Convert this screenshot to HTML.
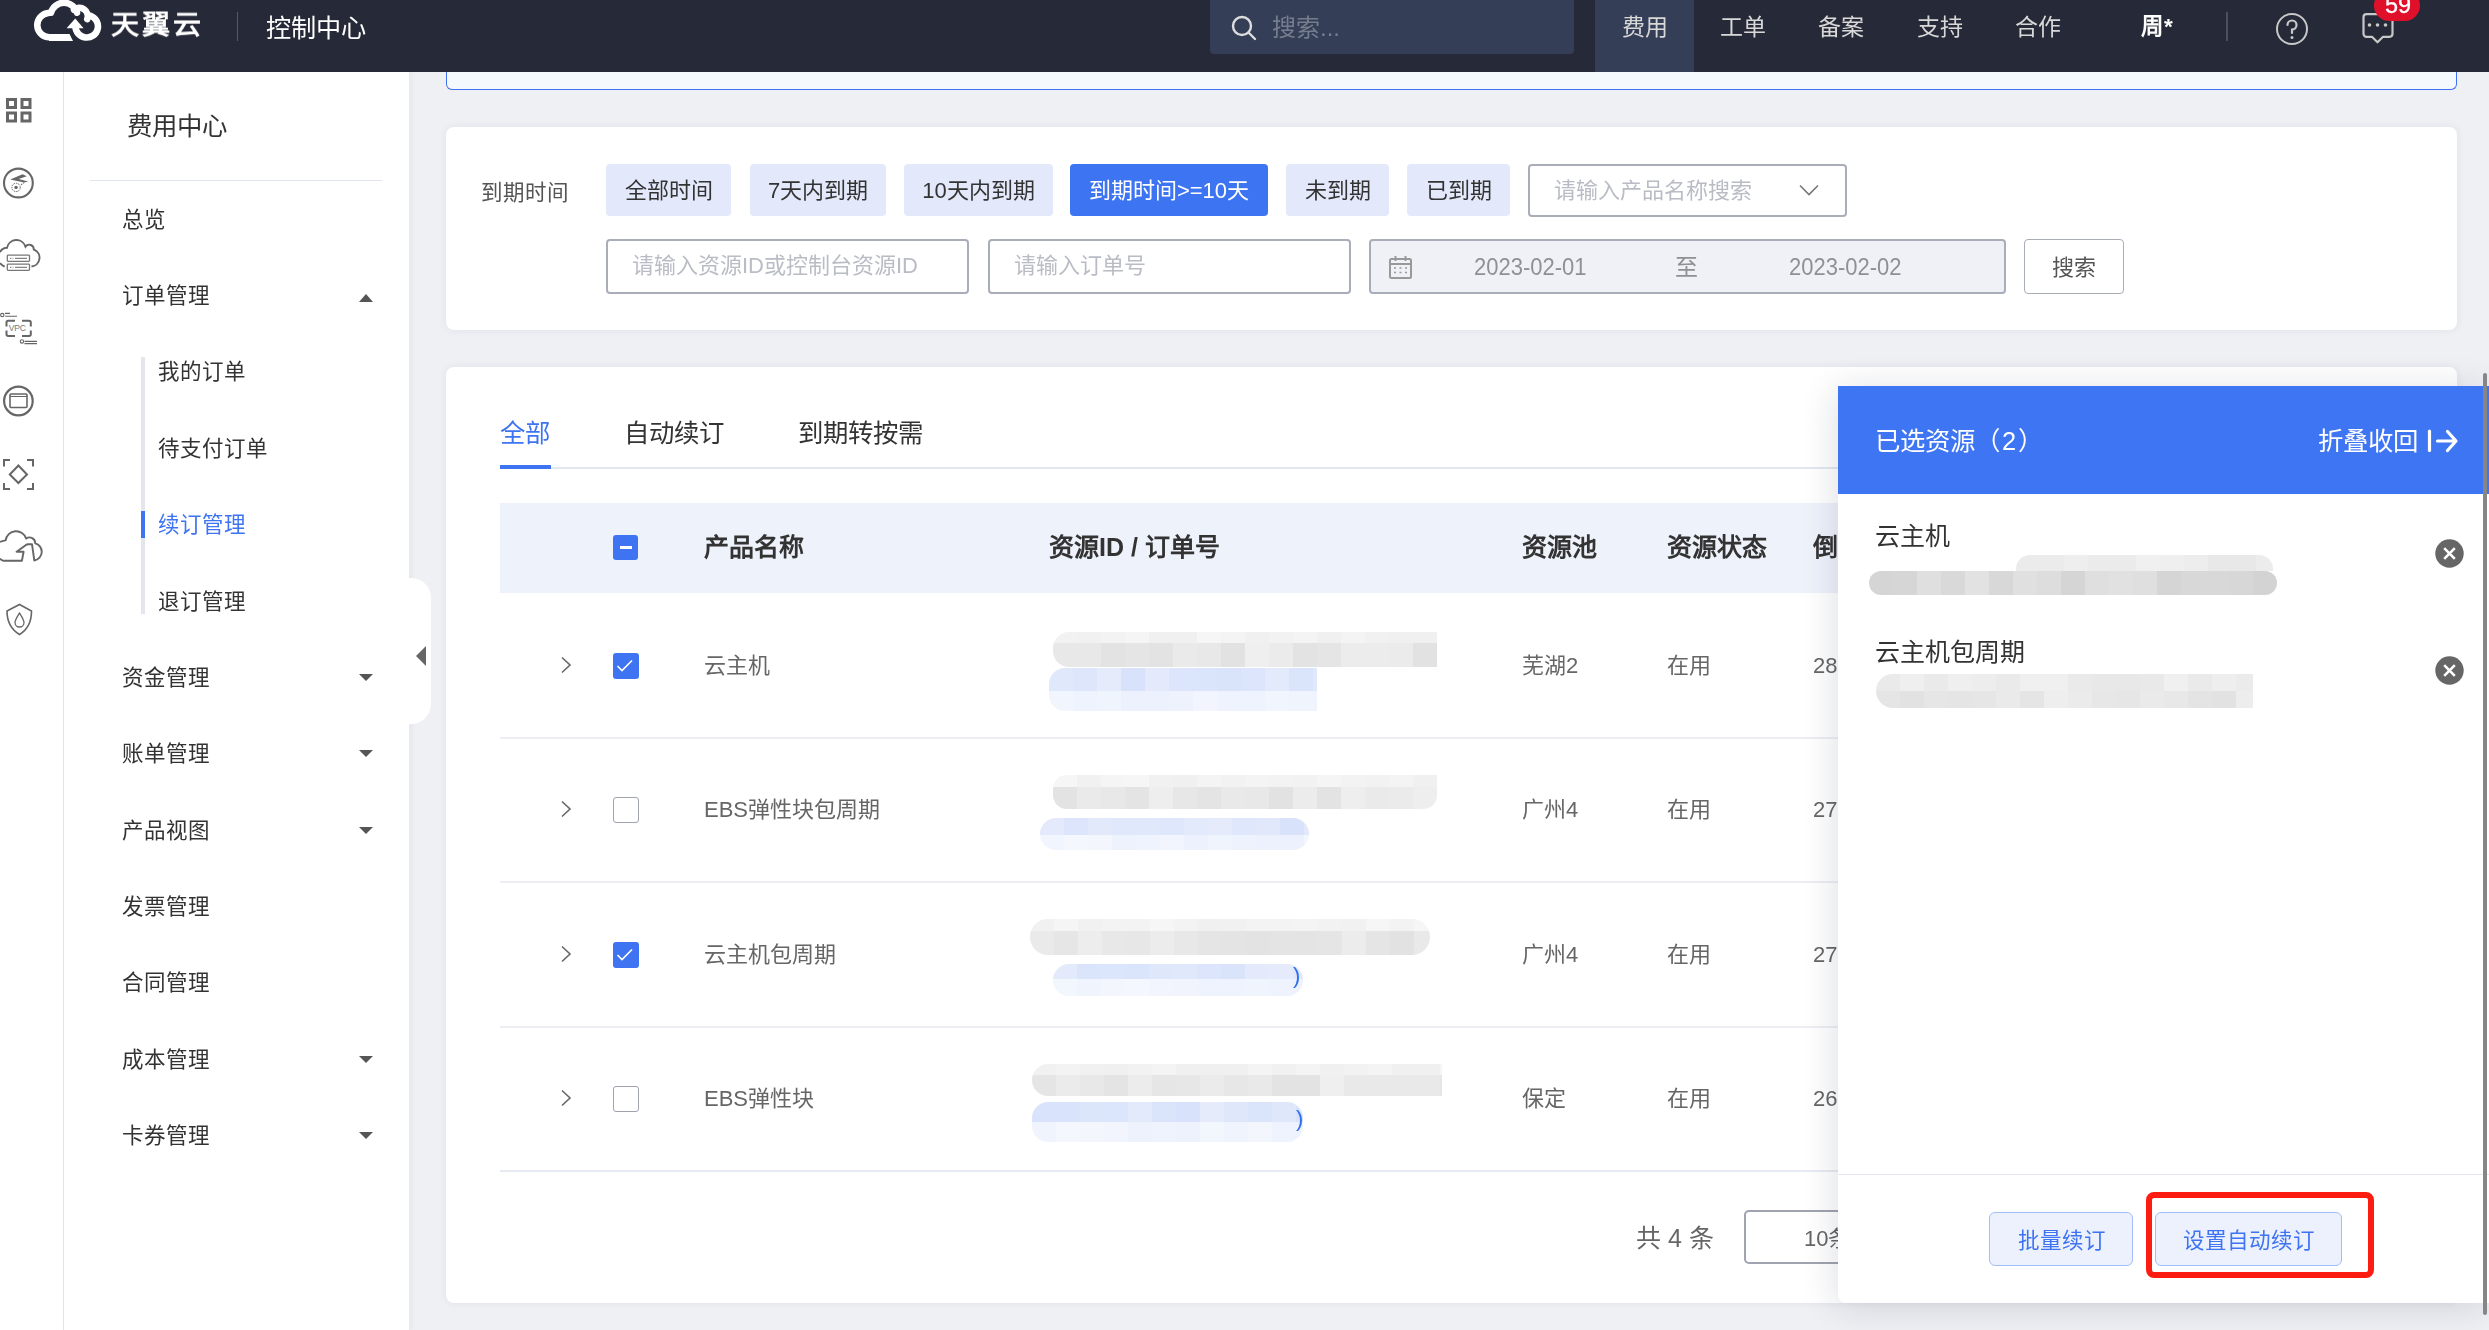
<!DOCTYPE html>
<html lang="zh-CN"><head><meta charset="utf-8">
<style>
*{margin:0;padding:0;box-sizing:border-box}
.t,.fbtn,.inp{will-change:transform}
html,body{width:2489px;height:1330px;overflow:hidden;background:#eff0f4;font-family:"Liberation Sans",sans-serif;color:#333}
.a{position:absolute}
.t{position:absolute;white-space:nowrap;line-height:1}
#top{z-index:5;left:0;top:0;width:2489px;height:72px;background:#262a38}
#rail{left:0;top:71px;width:64px;height:1259px;background:#fff;border-right:1px solid #e3e6ee}
#menu{left:64px;top:71px;width:345px;height:1259px;background:#fff;box-shadow:2px 0 6px rgba(30,40,70,0.05)}
.mi{font-size:21.5px;color:#333}
.caret{position:absolute;width:0;height:0;border-left:7px solid transparent;border-right:7px solid transparent}
.card{position:absolute;background:#fff;border-radius:8px;box-shadow:0 0 8px rgba(30,40,70,0.07)}
.fbtn{position:absolute;top:164px;height:52px;background:#e3e9fa;border-radius:4px;font-size:22px;color:#333;line-height:54px;text-align:center}
.inp{position:absolute;top:239px;height:54.5px;border:2px solid #a9adb9;border-radius:4px;background:#fff;font-size:22px;color:#b9bcc4;line-height:50px}
.th{font-size:25px;font-weight:bold;color:#333}
.td{font-size:22px;color:#666}
.cb{position:absolute;width:26px;height:26px;border-radius:3px}
.cbon{background:#3e74f2}
.cboff{border:1.5px solid #9fa3ad;background:#fff}
.sep{position:absolute;left:500px;width:1340px;height:2px;background:#eceef3}
.blur{position:absolute;border-radius:18px}
</style></head><body>
<!-- top bar -->
<div id="top" class="a">
  <svg class="a" style="left:34px;top:0" width="70" height="44" viewBox="0 0 70 44">
    <path d="M15.40 37.25 A12.15 12.15 0 0 1 14.34 13.00 M17.01 12.72 A13.45 13.45 0 0 1 42.99 12.72 M40.03 9.80 A8.35 8.35 0 0 1 53.25 19.06 M56.55 15.73 A11.25 11.25 0 1 1 41.45 26.30" fill="none" stroke="#fff" stroke-width="6.6" stroke-linecap="round"/>
    <path d="M15 34 H35.5 L39 41 H15 Z" fill="#fff"/>
    <path d="M41.2 18.6 L32.6 28.2 H49.6 Z" fill="#fff"/>
  </svg>
  <div class="t" style="left:111px;top:11px;font-size:28px;color:#fff;font-weight:bold;letter-spacing:3px;transform:scaleY(0.95);transform-origin:0 100%">天翼云</div>
  <div class="a" style="left:237px;top:12px;width:1px;height:29px;background:#555a66"></div>
  <div class="t" style="left:266px;top:15.5px;font-size:25.2px;color:#fff">控制中心</div>
  <div class="a" style="left:1210px;top:0;width:364px;height:54px;background:#353e57;border-radius:0 0 4px 4px"></div>
  <svg class="a" style="left:1230px;top:14px" width="28" height="28" viewBox="0 0 28 28"><circle cx="12" cy="12" r="9" fill="none" stroke="#ddd" stroke-width="2.4"/><path d="M18.5 18.5 L25 25" stroke="#ddd" stroke-width="2.4" stroke-linecap="round"/></svg>
  <div class="t" style="left:1272px;top:16px;font-size:24px;color:#767d8f">搜索...</div>
  <div class="a" style="left:1595px;top:0;width:99px;height:72px;background:#353e57"></div>
  <div class="t" style="left:1622px;top:15.5px;font-size:23px;color:#d8d8d8">费用</div>
  <div class="t" style="left:1720px;top:15.5px;font-size:23px;color:#d8d8d8">工单</div>
  <div class="t" style="left:1818px;top:15.5px;font-size:23px;color:#d8d8d8">备案</div>
  <div class="t" style="left:1917px;top:15.5px;font-size:23px;color:#d8d8d8">支持</div>
  <div class="t" style="left:2015px;top:15.5px;font-size:23px;color:#d8d8d8">合作</div>
  <div class="t" style="left:2141px;top:16px;font-size:22.5px;color:#fff;font-weight:bold">周*</div>
  <div class="a" style="left:2226px;top:12px;width:2px;height:29px;background:#4b505c"></div>
  <svg class="a" style="left:2275px;top:12px" width="34" height="34" viewBox="0 0 34 34"><circle cx="17" cy="17" r="15" fill="none" stroke="#c8c8c8" stroke-width="2"/><path d="M12.5 13 A4.5 4.5 0 1 1 17 17.5 V21" fill="none" stroke="#c8c8c8" stroke-width="2.2" stroke-linecap="round"/><circle cx="17" cy="25.5" r="1.5" fill="#c8c8c8"/></svg>
  <svg class="a" style="left:2360px;top:12px" width="36" height="34" viewBox="0 0 36 34"><path d="M6.5 2.2 H29.5 A3 3 0 0 1 32.5 5.2 V21.8 A3 3 0 0 1 29.5 24.8 H23 L17.5 30.3 L12 24.8 H6.5 A3 3 0 0 1 3.5 21.8 V5.2 A3 3 0 0 1 6.5 2.2 Z" fill="none" stroke="#c8c8c8" stroke-width="2.2" stroke-linejoin="round"/><circle cx="9.5" cy="13" r="1.8" fill="#c8c8c8"/><circle cx="17.5" cy="13" r="1.8" fill="#c8c8c8"/><circle cx="25.5" cy="13" r="1.8" fill="#c8c8c8"/></svg>
  <div class="a" style="left:2374px;top:-10px;width:46px;height:31px;background:#e0102b;border-radius:16px"></div>
  <div class="t" style="left:2385px;top:-6px;font-size:23.5px;color:#fff;-webkit-text-stroke:0.3px #fff">59</div>
</div>

<!-- rail -->
<div id="rail" class="a"></div>
<svg class="a" style="left:0;top:90px" width="64" height="560" viewBox="0 0 64 560" fill="none" stroke="#666" stroke-width="2">
  <g stroke-width="3"><rect x="7.5" y="9.5" width="8" height="8"/><rect x="22" y="9.5" width="8" height="8"/><rect x="7.5" y="23" width="8" height="8"/><rect x="22" y="23" width="8" height="8"/></g>
  <circle cx="18.4" cy="93" r="14.4" stroke-width="2.1"/><path d="M10.2 89.6 L22.6 84.2 L26.8 86.3 L18.6 88.9 L28.2 91.4 L24.2 92.5 L14.8 90.4 Z" fill="#666" stroke="none"/><path d="M24 92.6 L21 94.8" stroke-width="1.1" stroke-dasharray="1.3 1"/><circle cx="16.05" cy="97.4" r="4.2" stroke-width="1" stroke-dasharray="1.5 0.9"/><circle cx="16.05" cy="97.4" r="1.7" fill="#666" stroke="none"/>
  <path d="M0 162.2 A8 8 0 0 1 7 157.7 A9.6 9.6 0 0 1 25.5 156.6 A4.6 4.6 0 0 1 33.8 159.5 A8.8 8.8 0 0 1 31.5 176.5 M0 173.2 Q2.2 175.6 4.7 176.6" stroke-width="1.9"/><rect x="7.3" y="165.2" width="22.2" height="6.2" rx="0.8" stroke-width="1.3" stroke="#777"/><rect x="7.3" y="174.2" width="22.2" height="6.2" rx="0.8" stroke-width="1.3" stroke="#777"/><path d="M10 168.3 H11.3 M12.6 168.3 H13.4 M15 168.3 H27 M10 177.3 H11.3 M12.6 177.3 H13.4 M15 177.3 H27" stroke-width="1" stroke="#666"/>
  <path d="M6.5 236.5 V232.5 Q6.5 230.8 8.2 230.8 H15 M22 230.8 H29 Q30.8 230.8 30.8 232.5 V236.5 M6.5 240.5 V244.3 Q6.5 246 8.2 246 H15 M22 246 H29 Q30.8 246 30.8 244.3 V240.5" stroke-width="2"/><text x="17.3" y="241" font-size="8.6" fill="#777" stroke="none" text-anchor="middle" font-family="Liberation Sans" letter-spacing="-0.2">VPC</text><circle cx="2.3" cy="225.1" r="1.7" stroke-width="1.1"/><path d="M5 223.4 H10 M5.2 226.3 H17" stroke-width="1.1"/><circle cx="21.9" cy="251.4" r="1.7" stroke-width="1.1"/><path d="M24.5 251.4 H37 M24.5 253.6 H37" stroke-width="1.1"/>
  <circle cx="18.4" cy="311" r="14.3" stroke-width="2.2"/><rect x="10" y="304" width="17" height="13.5" rx="1" stroke-width="1.6"/><path d="M10 306.5 H27" stroke-width="1"/>
  <path d="M4 376.5 V370 H10 M27 370 H33 V376.5 M4 393 V399 H10 M27 399 H33 V393" stroke-width="2"/><path d="M18.4 375.5 L27 384.5 L18.4 393 L9.8 384.5 Z" stroke-width="2"/>
  <path d="M0 452 Q3 450.6 5.6 450.4 A10.6 10.6 0 0 1 26.2 448.6 A5.6 5.6 0 0 1 35.2 453.3 A8.8 8.8 0 0 1 34.3 470.5 L32 454.2 H28.2 Q27 454.2 26 454.9 L16.6 461.8 H23.6 L21.9 470.8 H3.6 Q1.5 470.2 0 468.6" stroke-width="1.9" stroke-linejoin="round"/>
  <path d="M19.5 514.5 L31.5 521 C31.5 533 27 540 19.5 544.5 C12 540 7 533 7 521 Z" stroke-width="1.6"/><path d="M19.5 523 C17 527 15 530 15 532.5 A4.5 4.5 0 0 0 24 532.5 C24 530 22 527 19.5 523 Z" stroke-width="1.3"/>
</svg>
<!-- menu -->
<div id="menu" class="a"></div>
<div class="t" style="left:127px;top:114px;font-size:25.4px;color:#333">费用中心</div>
<div class="a" style="left:90px;top:180px;width:292px;height:1px;background:#dfe3ec"></div>
<div class="t mi" style="left:122px;top:210px">总览</div>
<div class="t mi" style="left:122px;top:286px">订单管理</div>
<div class="caret" style="left:359px;top:294px;border-bottom:8px solid #555"></div>
<div class="a" style="left:141px;top:357px;width:4px;height:257px;background:#e3e6ef"></div>
<div class="a" style="left:141px;top:511px;width:4px;height:27px;background:#3e74f2"></div>
<div class="t mi" style="left:158px;top:362px">我的订单</div>
<div class="t mi" style="left:158px;top:439px">待支付订单</div>
<div class="t mi" style="left:158px;top:515px;color:#3e74f2">续订管理</div>
<div class="t mi" style="left:158px;top:592px">退订管理</div>
<div class="t mi" style="left:122px;top:668px">资金管理</div>
<div class="caret" style="left:359px;top:674px;border-top:7px solid #555"></div>
<div class="t mi" style="left:122px;top:744px">账单管理</div>
<div class="caret" style="left:359px;top:750px;border-top:7px solid #555"></div>
<div class="t mi" style="left:122px;top:821px">产品视图</div>
<div class="caret" style="left:359px;top:827px;border-top:7px solid #555"></div>
<div class="t mi" style="left:122px;top:897px">发票管理</div>
<div class="t mi" style="left:122px;top:973px">合同管理</div>
<div class="t mi" style="left:122px;top:1050px">成本管理</div>
<div class="caret" style="left:359px;top:1056px;border-top:7px solid #555"></div>
<div class="t mi" style="left:122px;top:1126px">卡券管理</div>
<div class="caret" style="left:359px;top:1132px;border-top:7px solid #555"></div>
<!-- collapse tab -->
<div class="a" style="left:409px;top:578px;width:22px;height:146px;background:#fff;border-radius:0 20px 20px 0"></div>
<div class="caret" style="left:416px;top:646px;border-left:none;border-top:10px solid transparent;border-bottom:10px solid transparent;border-right:10px solid #666;width:0;height:0"></div>

<!-- alert box -->
<div class="a" style="left:446px;top:60px;width:2011px;height:30px;background:#f4f9fe;border:1.5px solid #3f72f0;border-top:none;border-radius:0 0 6px 6px"></div>

<!-- filter card -->
<div class="card" style="left:446px;top:127px;width:2011px;height:203px"></div>
<div class="t" style="left:481px;top:183px;font-size:21.5px;color:#555">到期时间</div>
<div class="fbtn" style="left:606px;width:125px">全部时间</div>
<div class="fbtn" style="left:750px;width:136px">7天内到期</div>
<div class="fbtn" style="left:904px;width:149px">10天内到期</div>
<div class="fbtn" style="left:1070px;width:198px;background:#3d74f1;color:#fff">到期时间&gt;=10天</div>
<div class="fbtn" style="left:1286px;width:103px">未到期</div>
<div class="fbtn" style="left:1407px;width:103px">已到期</div>
<div class="inp" style="left:1528px;top:164px;width:319px;height:53px;padding-left:24px">请输入产品名称搜索</div>
<svg class="a" style="left:1797px;top:182px" width="24" height="16" viewBox="0 0 24 16"><path d="M3 3.5 L12 12.5 L21 3.5" fill="none" stroke="#777" stroke-width="1.6"/></svg>
<div class="inp" style="left:606px;width:363px;padding-left:24px">请输入资源ID或控制台资源ID</div>
<div class="inp" style="left:988px;width:363px;padding-left:24px">请输入订单号</div>
<div class="inp" style="left:1369px;width:637px;background:#f0f1f6"></div>
<svg class="a" style="left:1388px;top:255px" width="26" height="25" viewBox="0 0 26 25" fill="none" stroke="#999" stroke-width="2"><rect x="2" y="4" width="21" height="19" rx="1.5"/><path d="M2 9 H23 M7.5 1 V6 M17.5 1 V6"/><path d="M6 13 H8 M11.5 13 H13.5 M17 13 H19 M6 17.5 H8 M11.5 17.5 H13.5 M17 17.5 H19" stroke-width="1.6"/></svg>
<div class="t" style="left:1474px;top:255px;font-size:22px;color:#8f9094;transform:scaleY(1.1);transform-origin:0 0">2023-02-01</div>
<div class="t" style="left:1675px;top:256px;font-size:23px;color:#8f9094">至</div>
<div class="t" style="left:1789px;top:255px;font-size:22px;color:#8f9094;transform:scaleY(1.1);transform-origin:0 0">2023-02-02</div>
<div class="a" style="left:2024px;top:239px;width:100px;height:55px;border:1.5px solid #a9adb6;border-radius:4px;background:#fff"></div>
<div class="t" style="left:2052px;top:257px;font-size:22px;color:#555">搜索</div>

<!-- table card -->
<div class="card" style="left:446px;top:367px;width:2011px;height:936px"></div>
<div class="t" style="left:500px;top:421px;font-size:25.4px;color:#3e74f2">全部</div>
<div class="t" style="left:624px;top:421px;font-size:25.4px;color:#333">自动续订</div>
<div class="t" style="left:798px;top:421px;font-size:25.4px;color:#333">到期转按需</div>
<div class="a" style="left:500px;top:467px;width:1340px;height:2px;background:#e3e7f0"></div>
<div class="a" style="left:500px;top:465px;width:51px;height:4px;background:#3e74f2"></div>
<div class="a" style="left:500px;top:503px;width:1340px;height:90px;background:#eef2fb"></div>
<div class="cb cbon" style="left:613px;top:535px;width:25px;height:25px"><div class="a" style="left:6.5px;top:11px;width:12px;height:2.6px;background:#fff"></div></div>
<div class="t th" style="left:704px;top:535px">产品名称</div>
<div class="t th" style="left:1049px;top:535px">资源ID / 订单号</div>
<div class="t th" style="left:1522px;top:535px">资源池</div>
<div class="t th" style="left:1667px;top:535px">资源状态</div>
<div class="t th" style="left:1813px;top:535px">倒</div>
<svg class="a" style="left:560px;top:656px" width="12" height="18" viewBox="0 0 12 18"><path d="M2 1.5 L10 9 L2 16.5" fill="none" stroke="#666" stroke-width="1.6"/></svg>
<div class="cb cbon" style="left:613px;top:653px"><svg class="a" style="left:0;top:0" width="26" height="26" viewBox="0 0 26 26"><path d="M4.5 13 L9 17.5 L19 7.5" fill="none" stroke="#fff" stroke-width="1.6"/></svg></div>
<div class="t td" style="left:704px;top:655px">云主机</div>
<div class="t td" style="left:1522px;top:655px">芜湖2</div>
<div class="t td" style="left:1667px;top:655px">在用</div>
<div class="t td" style="left:1813px;top:655px">28</div>
<svg class="a" style="left:560px;top:800px" width="12" height="18" viewBox="0 0 12 18"><path d="M2 1.5 L10 9 L2 16.5" fill="none" stroke="#666" stroke-width="1.6"/></svg>
<div class="cb cboff" style="left:613px;top:797px"></div>
<div class="t td" style="left:704px;top:799px">EBS弹性块包周期</div>
<div class="t td" style="left:1522px;top:799px">广州4</div>
<div class="t td" style="left:1667px;top:799px">在用</div>
<div class="t td" style="left:1813px;top:799px">27</div>
<svg class="a" style="left:560px;top:945px" width="12" height="18" viewBox="0 0 12 18"><path d="M2 1.5 L10 9 L2 16.5" fill="none" stroke="#666" stroke-width="1.6"/></svg>
<div class="cb cbon" style="left:613px;top:942px"><svg class="a" style="left:0;top:0" width="26" height="26" viewBox="0 0 26 26"><path d="M4.5 13 L9 17.5 L19 7.5" fill="none" stroke="#fff" stroke-width="1.6"/></svg></div>
<div class="t td" style="left:704px;top:944px">云主机包周期</div>
<div class="t td" style="left:1522px;top:944px">广州4</div>
<div class="t td" style="left:1667px;top:944px">在用</div>
<div class="t td" style="left:1813px;top:944px">27</div>
<svg class="a" style="left:560px;top:1089px" width="12" height="18" viewBox="0 0 12 18"><path d="M2 1.5 L10 9 L2 16.5" fill="none" stroke="#666" stroke-width="1.6"/></svg>
<div class="cb cboff" style="left:613px;top:1086px"></div>
<div class="t td" style="left:704px;top:1088px">EBS弹性块</div>
<div class="t td" style="left:1522px;top:1088px">保定</div>
<div class="t td" style="left:1667px;top:1088px">在用</div>
<div class="t td" style="left:1813px;top:1088px">26</div>
<div class="sep" style="top:737px;height:1.5px"></div>
<div class="sep" style="top:881px;height:1.5px"></div>
<div class="sep" style="top:1026px;height:1.5px"></div>
<div class="sep" style="top:1170px;height:2px;background:#e6eaf2"></div>
<div class="blur" style="left:1053px;top:632px;width:384px;height:35px;border-radius:16px 0 0 16px;background:linear-gradient(90deg,#f2f2f2 0px 24px,#f1f1f1 24px 48px,#f3f3f3 48px 72px,#f5f5f5 72px 96px,#f0f0f0 96px 120px,#f0f0f0 120px 144px,#f6f6f6 144px 168px,#f4f4f4 168px 192px,#f0f0f0 192px 216px,#f2f2f2 216px 240px,#f4f4f4 240px 264px,#f0f0f0 264px 288px,#f4f4f4 288px 312px,#f1f1f1 312px 336px,#f0f0f0 336px 360px,#f0f0f0 360px 384px) top/100% 11px no-repeat,linear-gradient(90deg,#e8e8e8 0px 24px,#e8e8e8 24px 48px,#e3e3e3 48px 72px,#e5e5e5 72px 96px,#e3e3e3 96px 120px,#eaeaea 120px 144px,#e8e8e8 144px 168px,#e2e2e2 168px 192px,#efefef 192px 216px,#ebebeb 216px 240px,#e3e3e3 240px 264px,#e5e5e5 264px 288px,#ececec 288px 312px,#ececec 312px 336px,#ebebeb 336px 360px,#e2e2e2 360px 384px) bottom/100% 24px no-repeat"></div>
<div class="blur" style="left:1049px;top:668px;width:268px;height:43px;border-radius:16px 0 0 16px;background:linear-gradient(90deg,#e0e8fb 0px 24px,#dde6fb 24px 48px,#e5ebfb 48px 72px,#d8e3fb 72px 96px,#e4eafb 96px 120px,#dce5fb 120px 144px,#dae4fb 144px 168px,#d9e4fb 168px 192px,#dce5fb 192px 216px,#e3eafb 216px 240px,#dae4fb 240px 264px,#e0e8fb 264px 268px) top/100% 23px no-repeat,linear-gradient(90deg,#f1f5fd 0px 24px,#eff3fd 24px 48px,#f0f4fd 48px 72px,#ecf1fd 72px 96px,#ecf1fd 96px 120px,#edf2fd 120px 144px,#f2f5fd 144px 168px,#eff3fd 168px 192px,#eef3fd 192px 216px,#f1f5fd 216px 240px,#f0f4fd 240px 264px,#eef3fd 264px 268px) bottom/100% 20px no-repeat"></div>
<div class="blur" style="left:1053px;top:775px;width:384px;height:34px;border-radius:14px 0 14px 14px;background:linear-gradient(90deg,#f6f6f6 0px 24px,#f1f1f1 24px 48px,#f5f5f5 48px 72px,#f6f6f6 72px 96px,#f1f1f1 96px 120px,#f0f0f0 120px 144px,#f4f4f4 144px 168px,#f2f2f2 168px 192px,#f4f4f4 192px 216px,#f3f3f3 216px 240px,#f2f2f2 240px 264px,#f5f5f5 264px 288px,#f3f3f3 288px 312px,#f2f2f2 312px 336px,#f4f4f4 336px 360px,#f0f0f0 360px 384px) top/100% 12px no-repeat,linear-gradient(90deg,#e3e3e3 0px 24px,#eaeaea 24px 48px,#e8e8e8 48px 72px,#e4e4e4 72px 96px,#eeeeee 96px 120px,#e7e7e7 120px 144px,#e4e4e4 144px 168px,#e9e9e9 168px 192px,#e8e8e8 192px 216px,#e2e2e2 216px 240px,#ececec 240px 264px,#e3e3e3 264px 288px,#eeeeee 288px 312px,#eaeaea 312px 336px,#ebebeb 336px 360px,#eeeeee 360px 384px) bottom/100% 22px no-repeat"></div>
<div class="blur" style="left:1040px;top:818px;width:269px;height:32px;border-radius:16px;background:linear-gradient(90deg,#e4eafb 0px 24px,#dce5fb 24px 48px,#e1e9fb 48px 72px,#e0e8fb 72px 96px,#e0e8fb 96px 120px,#dee7fb 120px 144px,#e3eafb 144px 168px,#e5ebfb 168px 192px,#dee7fb 192px 216px,#e1e8fb 216px 240px,#d8e3fb 240px 264px,#e1e9fb 264px 269px) top/100% 17px no-repeat,linear-gradient(90deg,#f1f5fd 0px 24px,#f4f7fd 24px 48px,#f3f6fd 48px 72px,#eef2fd 72px 96px,#eff3fd 96px 120px,#f2f5fd 120px 144px,#ecf1fd 144px 168px,#f0f4fd 168px 192px,#edf2fd 192px 216px,#edf1fd 216px 240px,#ecf1fd 240px 264px,#f2f6fd 264px 269px) bottom/100% 15px no-repeat"></div>
<div class="blur" style="left:1030px;top:919px;width:400px;height:36px;border-radius:18px;background:linear-gradient(90deg,#f1f1f1 0px 24px,#f5f5f5 24px 48px,#f1f1f1 48px 72px,#f3f3f3 72px 96px,#f3f3f3 96px 120px,#f6f6f6 120px 144px,#f3f3f3 144px 168px,#f0f0f0 168px 192px,#f1f1f1 192px 216px,#f3f3f3 216px 240px,#f3f3f3 240px 264px,#f4f4f4 264px 288px,#f2f2f2 288px 312px,#f1f1f1 312px 336px,#f6f6f6 336px 360px,#f3f3f3 360px 384px,#f6f6f6 384px 400px) top/100% 12px no-repeat,linear-gradient(90deg,#eaeaea 0px 24px,#e6e6e6 24px 48px,#ededed 48px 72px,#e8e8e8 72px 96px,#e7e7e7 96px 120px,#ececec 120px 144px,#e8e8e8 144px 168px,#e5e5e5 168px 192px,#e4e4e4 192px 216px,#e3e3e3 216px 240px,#e4e4e4 240px 264px,#e4e4e4 264px 288px,#e5e5e5 288px 312px,#ececec 312px 336px,#e5e5e5 336px 360px,#e2e2e2 360px 384px,#e9e9e9 384px 400px) bottom/100% 24px no-repeat"></div>
<div class="blur" style="left:1053px;top:964px;width:250px;height:32px;border-radius:16px;background:linear-gradient(90deg,#e3eafb 0px 24px,#dae4fb 24px 48px,#dbe5fb 48px 72px,#dae4fb 72px 96px,#dfe7fb 96px 120px,#e0e8fb 120px 144px,#dce5fb 144px 168px,#d9e4fb 168px 192px,#e4eafb 192px 216px,#e5ebfb 216px 240px,#e1e8fb 240px 250px) top/100% 15px no-repeat,linear-gradient(90deg,#f2f6fd 0px 24px,#f0f4fd 24px 48px,#f3f7fd 48px 72px,#f4f7fd 72px 96px,#f2f5fd 96px 120px,#f1f4fd 120px 144px,#eff3fd 144px 168px,#eff3fd 168px 192px,#f0f4fd 192px 216px,#eff3fd 216px 240px,#edf2fd 240px 250px) bottom/100% 17px no-repeat"></div>
<div class="blur" style="left:1032px;top:1064px;width:410px;height:32px;border-radius:16px 0 0 16px;background:linear-gradient(90deg,#f1f1f1 0px 24px,#f3f3f3 24px 48px,#f1f1f1 48px 72px,#f0f0f0 72px 96px,#f2f2f2 96px 120px,#f4f4f4 120px 144px,#f0f0f0 144px 168px,#f0f0f0 168px 192px,#f0f0f0 192px 216px,#f4f4f4 216px 240px,#f1f1f1 240px 264px,#f4f4f4 264px 288px,#f0f0f0 288px 312px,#f2f2f2 312px 336px,#f4f4f4 336px 360px,#f0f0f0 360px 384px,#f0f0f0 384px 408px,#f6f6f6 408px 410px) top/100% 11px no-repeat,linear-gradient(90deg,#e5e5e5 0px 24px,#ebebeb 24px 48px,#e8e8e8 48px 72px,#e4e4e4 72px 96px,#ececec 96px 120px,#e6e6e6 120px 144px,#e7e7e7 144px 168px,#ebebeb 168px 192px,#e7e7e7 192px 216px,#e9e9e9 216px 240px,#e3e3e3 240px 264px,#e3e3e3 264px 288px,#efefef 288px 312px,#e9e9e9 312px 336px,#e9e9e9 336px 360px,#e9e9e9 360px 384px,#e9e9e9 384px 408px,#e6e6e6 408px 410px) bottom/100% 21px no-repeat"></div>
<div class="blur" style="left:1032px;top:1102px;width:271px;height:40px;border-radius:16px;background:linear-gradient(90deg,#d9e3fb 0px 24px,#d9e3fb 24px 48px,#dce6fb 48px 72px,#dbe5fb 72px 96px,#e3eafb 96px 120px,#dae4fb 120px 144px,#d8e3fb 144px 168px,#e5ebfb 168px 192px,#dfe7fb 192px 216px,#dae4fb 216px 240px,#dfe7fb 240px 264px,#d8e3fb 264px 271px) top/100% 20px no-repeat,linear-gradient(90deg,#f0f4fd 0px 24px,#f4f7fd 24px 48px,#f3f7fd 48px 72px,#f2f5fd 72px 96px,#eef2fd 96px 120px,#eff3fd 120px 144px,#edf2fd 144px 168px,#f2f6fd 168px 192px,#f0f4fd 192px 216px,#f3f6fd 216px 240px,#eef3fd 240px 264px,#eef2fd 264px 271px) bottom/100% 20px no-repeat"></div>
<div class="t" style="left:1293px;top:965px;font-size:22px;color:#2f6ef0">)</div>
<div class="t" style="left:1296px;top:1108px;font-size:22px;color:#2f6ef0">)</div>
<div class="t" style="left:1636px;top:1226px;font-size:25px;color:#666;word-spacing:0px">共 4 条</div>
<div class="a" style="left:1744px;top:1210px;width:140px;height:54px;border:2px solid #9fa4b0;border-radius:5px;background:#fff"></div>
<div class="t" style="left:1804px;top:1228px;font-size:22px;color:#666">10条</div>

<!-- right panel -->
<div class="a" style="left:1838px;top:386px;width:651px;height:917px;background:#fff;border-radius:0 0 0 8px;box-shadow:-2px 4px 36px rgba(20,30,60,0.14)"></div>
<div class="a" style="left:1838px;top:386px;width:651px;height:108px;background:#3e75f3"></div>
<div class="t" style="left:1875px;top:429px;font-size:25.4px;color:#fff">已选资源（<span style="margin:0 1.5px 0 2px">2</span>）</div>
<div class="t" style="left:2318px;top:428.5px;font-size:25.4px;color:#fff">折叠收回</div>
<svg class="a" style="left:2424px;top:426px" width="40" height="30" viewBox="0 0 40 30"><path d="M5.5 5 V24.5" stroke="#fff" stroke-width="3.2" stroke-linecap="round"/><path d="M13.5 15 H31.5 M23.5 5.5 L32 15 L23.5 24.5" fill="none" stroke="#fff" stroke-width="3.2" stroke-linecap="round" stroke-linejoin="round"/></svg>
<div class="blur" style="left:2016px;top:555px;width:257px;height:16px;border-radius:14px 14px 0 0;background:linear-gradient(90deg,#ebebeb 0px 24px,#ebebeb 24px 48px,#eeeeee 48px 72px,#ebebeb 72px 96px,#ebebeb 96px 120px,#f0f0f0 120px 144px,#efefef 144px 168px,#ededed 168px 192px,#e8e8e8 192px 216px,#e8e8e8 216px 240px,#ececec 240px 257px) top/100% 16px no-repeat,linear-gradient(90deg,#e9e9e9 0px 24px,#e6e6e6 24px 48px,#e5e5e5 48px 72px,#ededed 72px 96px,#ebebeb 96px 120px,#e7e7e7 120px 144px,#e9e9e9 144px 168px,#eeeeee 168px 192px,#ededed 192px 216px,#e7e7e7 216px 240px,#e7e7e7 240px 257px) bottom/100% 0px no-repeat"></div>
<div class="blur" style="left:1869px;top:571px;width:408px;height:24px;border-radius:12px;background:linear-gradient(90deg,#eeeeee 0px 24px,#efefef 24px 48px,#eeeeee 48px 72px,#efefef 72px 96px,#f1f1f1 96px 120px,#efefef 120px 144px,#f0f0f0 144px 168px,#efefef 168px 192px,#f1f1f1 192px 216px,#f2f2f2 216px 240px,#f2f2f2 240px 264px,#f4f4f4 264px 288px,#eeeeee 288px 312px,#f1f1f1 312px 336px,#f3f3f3 336px 360px,#f0f0f0 360px 384px,#f4f4f4 384px 408px) top/100% 0px no-repeat,linear-gradient(90deg,#d5d5d5 0px 24px,#d6d6d6 24px 48px,#dfdfdf 48px 72px,#d9d9d9 72px 96px,#e2e2e2 96px 120px,#d8d8d8 120px 144px,#e0e0e0 144px 168px,#dddddd 168px 192px,#d5d5d5 192px 216px,#dfdfdf 216px 240px,#e1e1e1 240px 264px,#dfdfdf 264px 288px,#d5d5d5 288px 312px,#d8d8d8 312px 336px,#d8d8d8 336px 360px,#d7d7d7 360px 384px,#d3d3d3 384px 408px) bottom/100% 24px no-repeat"></div>
<div class="blur" style="left:1876px;top:674px;width:377px;height:34px;border-radius:17px 0 0 17px;background:linear-gradient(90deg,#eaeaea 0px 24px,#efefef 24px 48px,#eaeaea 48px 72px,#efefef 72px 96px,#ededed 96px 120px,#eaeaea 120px 144px,#f0f0f0 144px 168px,#f0f0f0 168px 192px,#eaeaea 192px 216px,#e8e8e8 216px 240px,#e8e8e8 240px 264px,#e9e9e9 264px 288px,#f0f0f0 288px 312px,#eaeaea 312px 336px,#eeeeee 336px 360px,#ebebeb 360px 377px) top/100% 17px no-repeat,linear-gradient(90deg,#e5e5e5 0px 24px,#e2e2e2 24px 48px,#e6e6e6 48px 72px,#e5e5e5 72px 96px,#e6e6e6 96px 120px,#eaeaea 120px 144px,#e5e5e5 144px 168px,#eeeeee 168px 192px,#ebebeb 192px 216px,#e7e7e7 216px 240px,#e6e6e6 240px 264px,#eaeaea 264px 288px,#e8e8e8 288px 312px,#e4e4e4 312px 336px,#e2e2e2 336px 360px,#ededed 360px 377px) bottom/100% 17px no-repeat"></div>
<div class="t" style="left:1875px;top:524px;font-size:25px;color:#333">云主机</div>
<div class="t" style="left:1875px;top:640px;font-size:25px;color:#333">云主机包周期</div>
<svg class="a" style="left:2435px;top:539px" width="29" height="29" viewBox="0 0 29 29"><circle cx="14.5" cy="14.5" r="14.2" fill="#666"/><path d="M9.2 9.2 L19.8 19.8 M19.8 9.2 L9.2 19.8" stroke="#fff" stroke-width="2.6"/></svg>
<svg class="a" style="left:2435px;top:656px" width="29" height="29" viewBox="0 0 29 29"><circle cx="14.5" cy="14.5" r="14.2" fill="#666"/><path d="M9.2 9.2 L19.8 19.8 M19.8 9.2 L9.2 19.8" stroke="#fff" stroke-width="2.6"/></svg>
<div class="a" style="left:1838px;top:1174px;width:651px;height:1px;background:#e6e8ee"></div>
<div class="a" style="left:1989px;top:1212px;width:144px;height:54px;border:1px solid #a3bdf8;border-radius:6px;background:#ecf1fd"></div>
<div class="t" style="left:2018px;top:1231px;font-size:21.5px;color:#3e74f2">批量续订</div>
<div class="a" style="left:2155px;top:1212px;width:187px;height:54px;border:1px solid #a3bdf8;border-radius:6px;background:#ecf1fd"></div>
<div class="t" style="left:2183px;top:1231px;font-size:21.5px;color:#3e74f2">设置自动续订</div>
<div class="a" style="left:2146px;top:1192px;width:228px;height:86px;border:6.5px solid #fd1c12;border-radius:8px"></div>
<div class="a" style="left:2483px;top:373px;width:4px;height:942px;background:#868686;border-radius:2px"></div>
</body></html>
